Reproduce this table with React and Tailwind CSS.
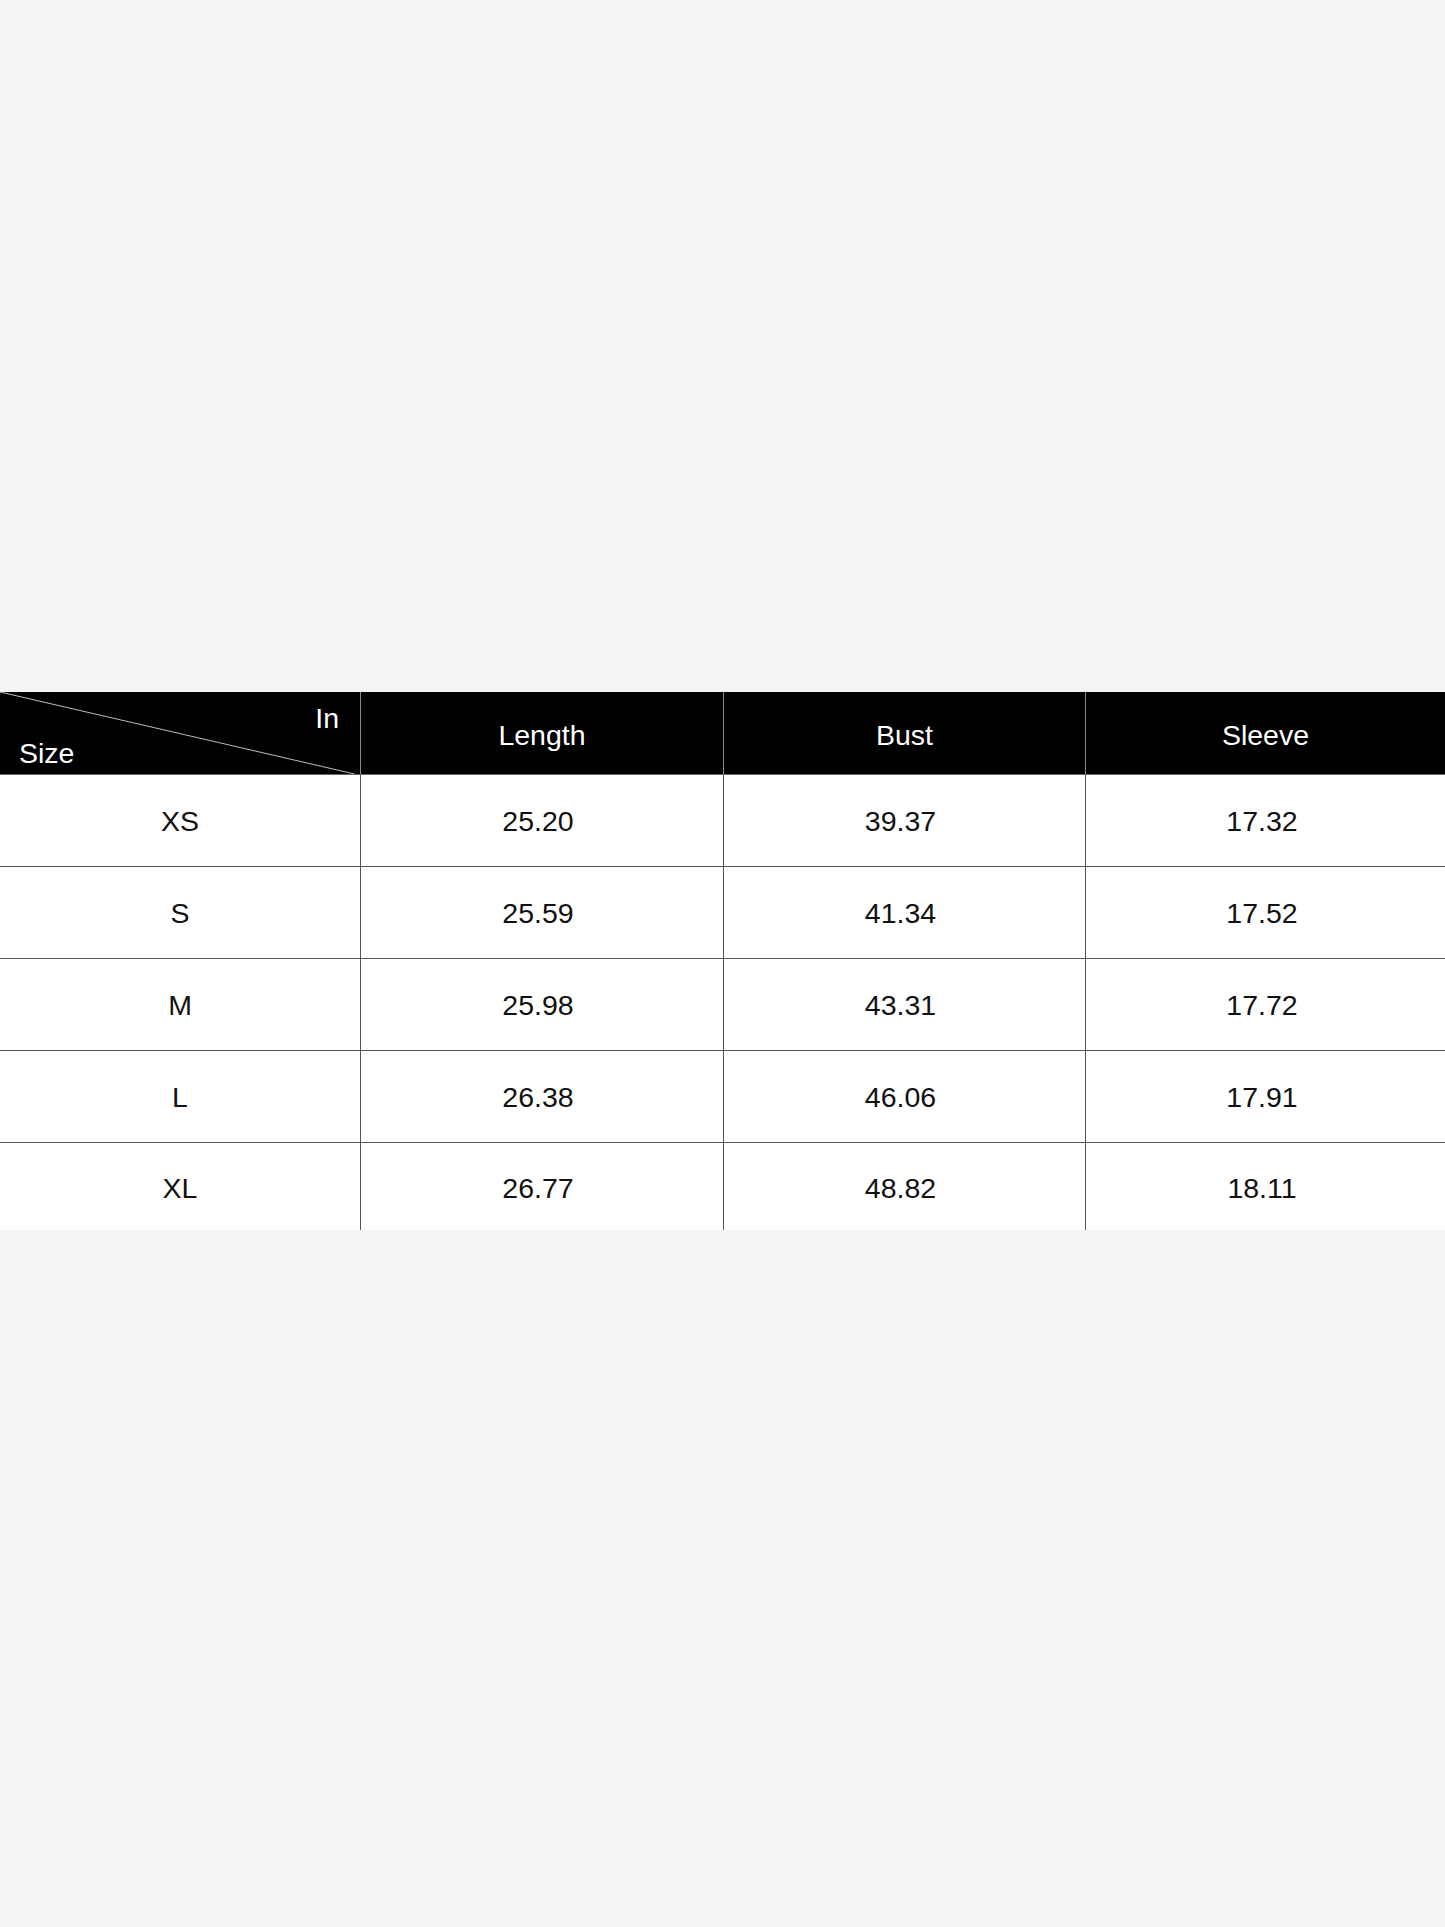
import React from "react";

const rows = [
  ["XS", "25.20", "39.37", "17.32"],
  ["S", "25.59", "41.34", "17.52"],
  ["M", "25.98", "43.31", "17.72"],
  ["L", "26.38", "46.06", "17.91"],
  ["XL", "26.77", "48.82", "18.11"],
];

export default function App() {
  return (
    <div
      className="min-h-[1927px] w-full bg-[#f4f4f4] pt-[692px]"
      style={{ fontFamily: '"Liberation Sans", Arial, sans-serif' }}
    >
      <div className="w-full">
        <div className="grid h-[83px] grid-cols-[361px_363px_362px_1fr] border-b border-[#666] bg-black text-[28.5px] text-white">
          <div className="relative border-r border-[#888]">
            <svg className="absolute inset-0 h-full w-full" preserveAspectRatio="none" viewBox="0 0 100 100">
              <line x1="0" y1="0" x2="98.5" y2="100" stroke="#bbb" strokeWidth="1" vectorEffect="non-scaling-stroke" />
            </svg>
            <span className="absolute right-[21px] top-[12px] leading-none">In</span>
            <span className="absolute left-[19px] top-[47px] leading-none">Size</span>
          </div>
          <div className="flex items-center justify-center border-r border-[#888] pt-[5px]">Length</div>
          <div className="flex items-center justify-center border-r border-[#888] pt-[5px]">Bust</div>
          <div className="flex items-center justify-center pt-[5px]">Sleeve</div>
        </div>
        {rows.map((r, i) => {
          const last = i === rows.length - 1;
          return (
            <div
              key={r[0]}
              className={
                last
                  ? "grid h-[87px] grid-cols-[361px_363px_362px_1fr] bg-white text-[28.5px] text-[#111]"
                  : "grid h-[92px] grid-cols-[361px_363px_362px_1fr] border-b border-[#555] bg-white text-[28.5px] text-[#111]"
              }
            >
              {r.map((c, j) => {
                let cls = "flex items-center justify-center";
                cls += last ? " pt-[4px]" : " pt-[2px]";
                if (j < 3) cls += " border-r border-[#555]";
                if (j === 1 || j === 2) cls += " pr-[8px]";
                if (j === 3) cls += " pr-[7px]";
                return (
                  <div key={j} className={cls}>
                    {c}
                  </div>
                );
              })}
            </div>
          );
        })}
      </div>
    </div>
  );
}
